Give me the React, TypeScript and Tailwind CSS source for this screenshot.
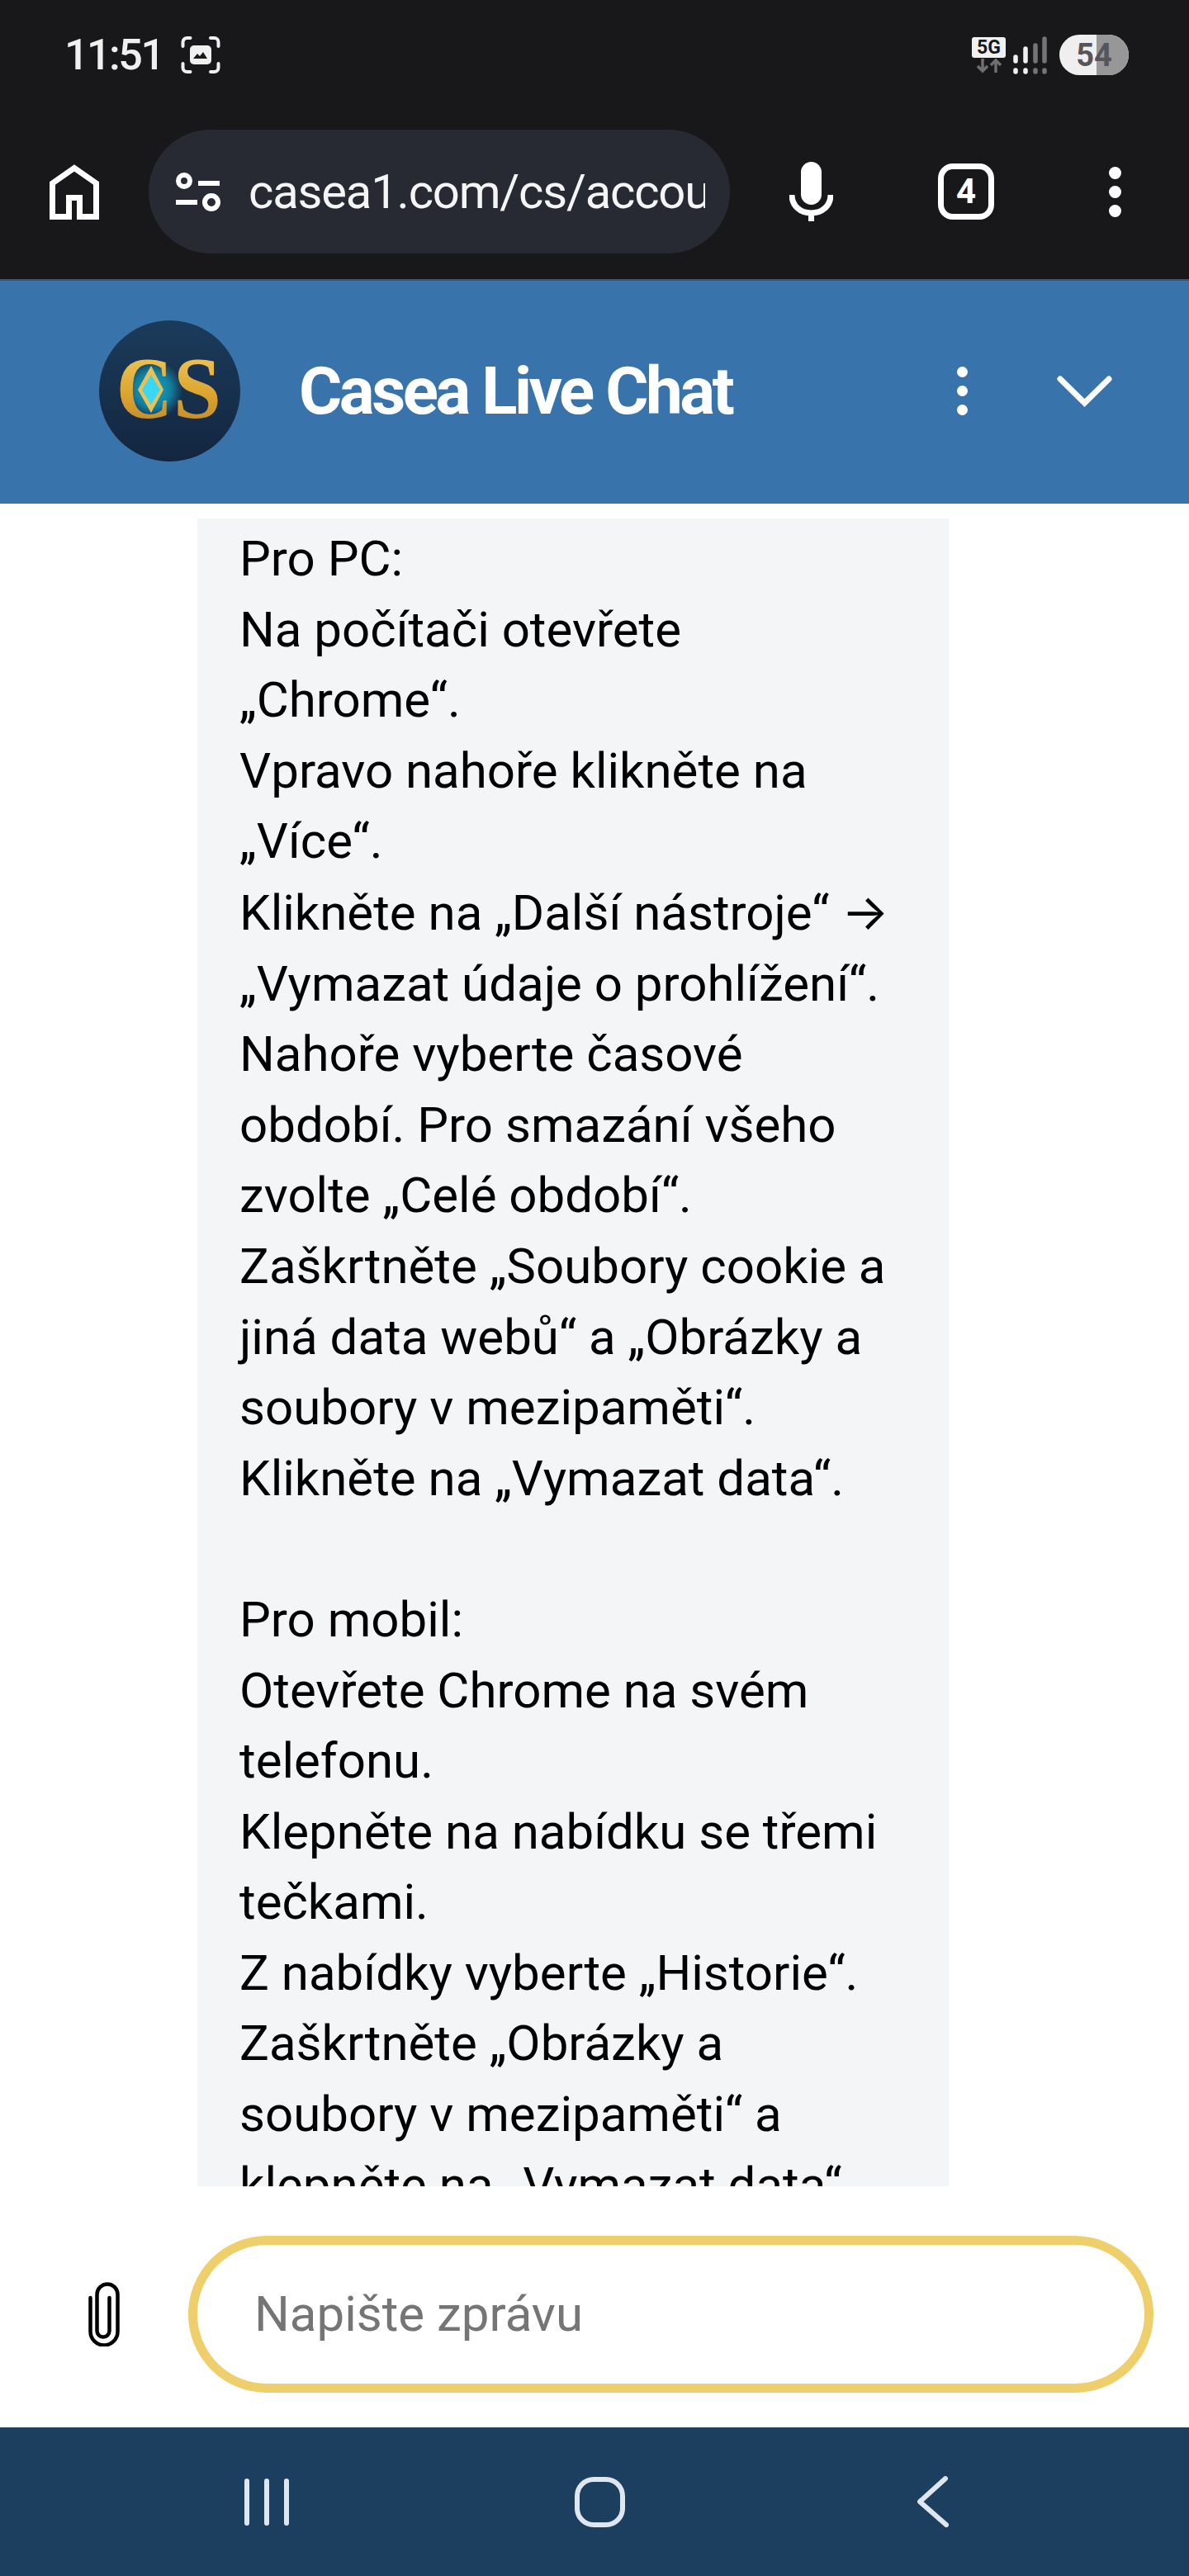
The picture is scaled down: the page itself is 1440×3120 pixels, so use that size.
const LINES = [
  'Pro PC:',
  'Na počítači otevřete',
  '„Chrome“.',
  'Vpravo nahoře klikněte na',
  '„Více“.',
  'Klikněte na „Další nástroje“ ',
  '„Vymazat údaje o prohlížení“.',
  'Nahoře vyberte časové',
  'období. Pro smazání všeho',
  'zvolte „Celé období“.',
  'Zaškrtněte „Soubory cookie a',
  'jiná data webů“ a „Obrázky a',
  'soubory v mezipaměti“.',
  'Klikněte na „Vymazat data“.',
  '\u00a0',
  'Pro mobil:',
  'Otevřete Chrome na svém',
  'telefonu.',
  'Klepněte na nabídku se třemi',
  'tečkami.',
  'Z nabídky vyberte „Historie“.',
  'Zaškrtněte „Obrázky a',
  'soubory v mezipaměti“ a',
  'klepněte na „Vymazat data“.',
]

function StatusBar() {
  return (
    <div className="flex items-center h-[133px] pl-[78px] pr-[73px]">
      <span className="text-[52px] leading-none font-medium text-[#f0f0f0] tracking-[-2.500px]">11:51</span>
      {/* screenshot */}
      <svg className="ml-[22px]" width="48" height="47" viewBox="0 0 48 47" fill="none">
        <path d="M2.500 13V8a5 5 0 0 1 5-5h4M36 3h4.500a5 5 0 0 1 5 5v5M2.500 34v5a5 5 0 0 0 5 5h4M36 44h4.500a5 5 0 0 0 5-5v-5" stroke="#f0f0f0" strokeWidth="4" strokeLinecap="round" />
        <rect x="11" y="12" width="26" height="23" rx="5" fill="#f0f0f0" />
        <path d="M15 28l5-6 3 3 4-5 5 8z" fill="#18181a" />
      </svg>
      <div className="flex-1" />
      <div className="flex flex-col items-center w-[41px]">
        <div className="w-[41px] h-[25px] rounded-[3px] bg-[#f0f0f0] flex items-center justify-center text-[23px] font-bold leading-none text-[#18181a]">5G</div>
        <svg width="32" height="19" viewBox="0 0 32 19" fill="none" stroke="#6f6f6f" strokeWidth="3.500">
          <path d="M8 1v15M2 10l6 6 6-6M24 18V3M18 9l6-6 6 6" />
        </svg>
      </div>
      <svg className="ml-[9px]" width="41" height="46" viewBox="0 0 41 46" fill="none" strokeLinecap="round" strokeWidth="5.500">
        <path d="M3 25v5M3 41v2M15 15v15M15 41v2" stroke="#f0f0f0" />
        <path d="M27 11v19M27 41v2M38 3v27M38 41v2" stroke="#747474" />
      </svg>
      <div className="relative ml-[15px] w-[84px] h-[49px] rounded-full overflow-hidden flex bg-[#efefef]">
        <div className="w-[45px]" />
        <div className="flex-1 bg-[#979797]" />
        <span className="absolute inset-0 flex items-center justify-center text-[38px] leading-none font-bold text-[#56565a]">54</span>
      </div>
    </div>
  )
}

function BrowserBar() {
  return (
    <div className="flex items-center h-[207px] pb-[7px] border-b-2 border-[#46505c]">
      <svg className="ml-[60px]" width="60" height="67" viewBox="0 0 60 67" fill="none" stroke="#fff" strokeWidth="7">
        <path d="M3.500 63.500V23L30 4.500 56.500 23v40.500H36.500V40.500H23.500v23z" />
      </svg>
      <div className="ml-[60px] w-[704px] h-[150px] rounded-full bg-[#282a33] flex items-center overflow-hidden">
        <svg className="ml-[33px] shrink-0" width="55" height="47" viewBox="0 0 55 47" fill="none" stroke="#fff" strokeWidth="6">
          <circle cx="10" cy="10" r="7" />
          <path d="M27 13h26M0 36h26" />
          <circle cx="43" cy="36" r="8" />
        </svg>
        <div className="ml-[33px] w-[553px] overflow-hidden whitespace-nowrap text-[58px] leading-none tracking-[-1.200px] text-[#f5f5f5]">casea1.com/cs/account</div>
      </div>
      <svg className="ml-[72px]" width="53" height="72" viewBox="0 0 53 72" fill="none">
        <rect x="14" y="0" width="25" height="52" rx="12.500" fill="#fff" />
        <path d="M3 40c0 13 10 22 23.500 22S50 53 50 40M26.500 60v12" stroke="#fff" strokeWidth="7" />
      </svg>
      <div className="ml-[127px] w-[68px] h-[68px] rounded-[18px] border-[7px] border-white flex items-center justify-center text-[42px] font-bold leading-none text-white">4</div>
      <div className="ml-[139px] flex flex-col gap-[8px]">
        <span className="w-[15px] h-[15px] rounded-full bg-white" />
        <span className="w-[15px] h-[15px] rounded-full bg-white" />
        <span className="w-[15px] h-[15px] rounded-full bg-white" />
      </div>
    </div>
  )
}

function CaseaLogo() {
  return (
    <svg width="171" height="171" viewBox="0 0 171 171">
      <defs>
        <linearGradient id="bg" x1="0" y1="0" x2="0" y2="1">
          <stop offset="0" stopColor="#1b3b5c" />
          <stop offset="1" stopColor="#13263f" />
        </linearGradient>
        <linearGradient id="gold" x1="0" y1="0" x2="0" y2="1">
          <stop offset="0" stopColor="#f3cf6a" />
          <stop offset="0.55" stopColor="#dca52f" />
          <stop offset="1" stopColor="#b9812a" />
        </linearGradient>
        <radialGradient id="glow">
          <stop offset="0" stopColor="#18a9c9" />
          <stop offset="0.6" stopColor="#127f9f" />
          <stop offset="1" stopColor="#127f9f" stopOpacity="0" />
        </radialGradient>
      </defs>
      <circle cx="85.500" cy="85.500" r="85.500" fill="url(#bg)" />
      <circle cx="65" cy="84" r="36" fill="url(#glow)" />
      <text x="21" y="118" fontFamily="'Liberation Serif', serif" fontWeight="700" fontSize="105" fill="url(#gold)" textLength="68" lengthAdjust="spacingAndGlyphs">C</text>
      <text x="90" y="118" fontFamily="'Liberation Serif', serif" fontWeight="700" fontSize="105" fill="url(#gold)" textLength="58" lengthAdjust="spacingAndGlyphs">S</text>
      <polygon points="63,55 78,84 63,112 47,84" fill="#e8c257" />
      <polygon points="63,66 74,84 63,102 52,84" fill="#39d7f2" />
    </svg>
  )
}

function ChatHeader() {
  return (
    <div className="flex items-center h-[270px] pb-[3px] bg-[#3973ab] pl-[120px]">
      <CaseaLogo />
      <span className="ml-[71px] text-[80px] leading-none font-bold text-white tracking-[-3.500px]">Casea Live Chat</span>
      <div className="ml-[273px] flex flex-col gap-[10px]">
        <span className="w-[13px] h-[13px] rounded-full bg-white" />
        <span className="w-[13px] h-[13px] rounded-full bg-white" />
        <span className="w-[13px] h-[13px] rounded-full bg-white" />
      </div>
      <svg className="ml-[108px]" width="67" height="38" viewBox="0 0 67 38" fill="none" stroke="#fff" strokeWidth="7" strokeLinecap="round">
        <path d="M4 4l29.500 29L63 4" />
      </svg>
    </div>
  )
}

function InputRow() {
  return (
    <div className="flex items-center h-[292px] shrink-0 pt-[18px]">
      <svg className="ml-[107px] shrink-0" width="38" height="78" viewBox="0 0 38 78" fill="none" stroke="#000" strokeWidth="4.500" strokeLinecap="round">
        <path d="M2.500 19V60a16.500 16.500 0 0 0 33 0V15a12.500 12.500 0 0 0-25 0V59a7.500 7.500 0 0 0 15 0V19" />
      </svg>
      <div className="ml-[83px] w-[1169px] h-[190px] rounded-full border-[11px] border-[#eecf6b] flex items-center pl-[69px]">
        <span className="text-[60px] leading-none text-[#757575]">Napište zprávu</span>
      </div>
    </div>
  )
}

function NavBar() {
  return (
    <div className="flex items-center h-[180px] shrink-0 bg-[#1c3f60]">
      <div className="ml-[296px] flex gap-[18px]">
        <span className="w-[6px] h-[57px] rounded-full bg-[#dfe6ee]" />
        <span className="w-[6px] h-[57px] rounded-full bg-[#dfe6ee]" />
        <span className="w-[6px] h-[57px] rounded-full bg-[#dfe6ee]" />
      </div>
      <div className="ml-[346px] w-[61px] h-[61px] rounded-[23px] border-[6px] border-[#dfe6ee]" />
      <svg className="ml-[354px]" width="38" height="62" viewBox="0 0 38 62" fill="none" stroke="#dfe6ee" strokeWidth="6" strokeLinecap="round" strokeLinejoin="round">
        <path d="M34 3L3 31l32 28" />
      </svg>
    </div>
  )
}

export default function App() {
  return (
    <div className="flex flex-col w-[1440px] h-[3120px] bg-white overflow-hidden font-['Roboto',sans-serif]">
      <div className="bg-[#18181a] shrink-0">
        <StatusBar />
        <BrowserBar />
      </div>
      <ChatHeader />
      {/* messages */}
      <div className="flex-1 min-h-0 overflow-hidden pt-[18px]">
        <div className="ml-[239px] w-[910px] h-full overflow-hidden bg-[#f4f5f7] pl-[51px] pt-[6px] text-[60px] leading-[85.6px] text-black whitespace-nowrap">
          {LINES.map((l, i) => (
            <div key={i}>
              {l}
              {i === 5 && <span className="font-['Inter',sans-serif]">→</span>}
            </div>
          ))}
        </div>
      </div>
      <InputRow />
      <NavBar />
    </div>
  )
}
